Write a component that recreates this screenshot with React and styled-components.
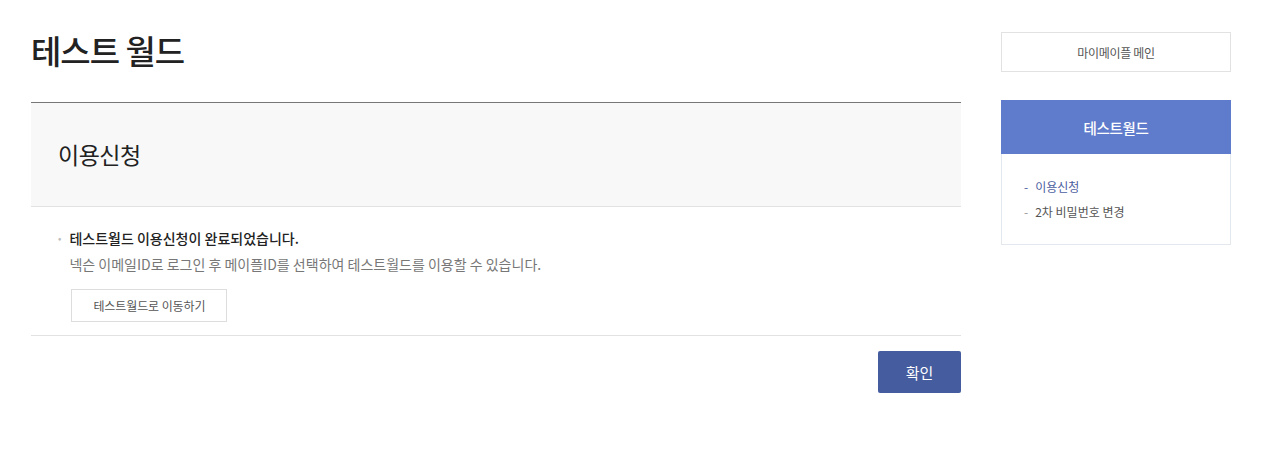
import React from 'react';
import styled, { createGlobalStyle } from 'styled-components';

const GlobalStyle = createGlobalStyle`
  * {
    box-sizing: border-box;
  }

  body {
    margin: 0;
    background: #fff;
    font-family: 'Noto Sans CJK KR', 'Noto Sans', sans-serif;
    color: #333;
  }
`;

const Page = styled.div`
  display: flex;
  align-items: flex-start;
  gap: 40px;
  padding: 32px 0 0 31px;
  width: 1267px;
`;

const Main = styled.main`
  width: 930px;
`;

const Title = styled.h1`
  margin: 0;
  height: 70px;
  font-size: 33px;
  font-weight: 500;
  line-height: 36px;
  letter-spacing: -1px;
  color: #222;
`;

const SectionHead = styled.div`
  display: flex;
  align-items: center;
  height: 105px;
  padding: 0 27px 2px;
  background: #f8f8f8;
  border-top: 1px solid #777;
  border-bottom: 1px solid #e2e2e2;
`;

const SectionTitle = styled.h2`
  margin: 0;
  font-size: 23px;
  font-weight: 400;
  color: #222;
  letter-spacing: -0.5px;
`;

const Body = styled.div`
  padding: 20px 40px 13px 27px;
  border-bottom: 1px solid #e2e2e2;
`;

const Notice = styled.div`
  display: flex;
  gap: 8px;
`;

const Bullet = styled.span`
  font-size: 10px;
  line-height: 22px;
  color: #bbb;
`;

const NoticeText = styled.div`
  display: flex;
  flex-direction: column;
  gap: 4px;
`;

const Line = styled.p`
  margin: 0;
  font-size: 14px;
  line-height: 22px;
  letter-spacing: 0;
  color: ${(p) => (p.$strong ? '#222' : '#777')};
  font-weight: ${(p) => (p.$strong ? 500 : 400)};
`;

const GhostButton = styled.button`
  margin: 10px 0 0 2px;
  width: 156px;
  height: 33px;
  background: #fff;
  border: 1px solid #ddd;
  font-family: inherit;
  font-size: 12px;
  color: #555;
  letter-spacing: -0.1px;
  cursor: pointer;
`;

const Actions = styled.div`
  display: flex;
  justify-content: flex-end;
  padding-top: 15px;
`;

const PrimaryButton = styled.button`
  width: 83px;
  height: 42px;
  border: 0;
  border-radius: 2px;
  background: #455c9e;
  color: #fff;
  font-family: inherit;
  font-size: 15px;
  cursor: pointer;
`;

const Side = styled.aside`
  width: 230px;
  display: flex;
  flex-direction: column;
  gap: 28px;
`;

const MainLink = styled.div`
  display: flex;
  align-items: center;
  justify-content: center;
  height: 40px;
  border: 1px solid #e2e2e2;
  font-size: 12px;
  color: #555;
  letter-spacing: -0.3px;
`;

const Menu = styled.nav`
  border: 1px solid #e3e7ee;
  border-top: 0;
`;

const MenuHead = styled.div`
  display: flex;
  align-items: center;
  justify-content: center;
  height: 54px;
  margin: 0 -1px;
  background: #5f7bcb;
  color: #fff;
  font-size: 14.5px;
  font-weight: 500;
  letter-spacing: -0.3px;
`;

const MenuList = styled.ul`
  list-style: none;
  margin: 0;
  padding: 20px 22px 20px;
`;

const MenuItem = styled.li`
  display: flex;
  gap: 7px;
  font-size: 12px;
  line-height: 25px;
  letter-spacing: 0;
  color: ${(p) => (p.$active ? '#4c5ea0' : '#555')};

  &::before {
    content: '-';
    color: ${(p) => (p.$active ? '#4c5ea0' : '#999')};
  }
`;

export default function App() {
  return (
    <>
      <GlobalStyle />
      <Page>
        <Main>
          <Title>테스트 월드</Title>
          <SectionHead>
            <SectionTitle>이용신청</SectionTitle>
          </SectionHead>
          <Body>
            <Notice>
              <Bullet>•</Bullet>
              <NoticeText>
                <Line $strong>테스트월드 이용신청이 완료되었습니다.</Line>
                <Line>넥슨 이메일ID로 로그인 후 메이플ID를 선택하여 테스트월드를 이용할 수 있습니다.</Line>
                <div>
                  <GhostButton>테스트월드로 이동하기</GhostButton>
                </div>
              </NoticeText>
            </Notice>
          </Body>
          <Actions>
            <PrimaryButton>확인</PrimaryButton>
          </Actions>
        </Main>
        <Side>
          <MainLink>마이메이플 메인</MainLink>
          <Menu>
            <MenuHead>테스트월드</MenuHead>
            <MenuList>
              <MenuItem $active>이용신청</MenuItem>
              <MenuItem>2차 비밀번호 변경</MenuItem>
            </MenuList>
          </Menu>
        </Side>
      </Page>
    </>
  );
}
